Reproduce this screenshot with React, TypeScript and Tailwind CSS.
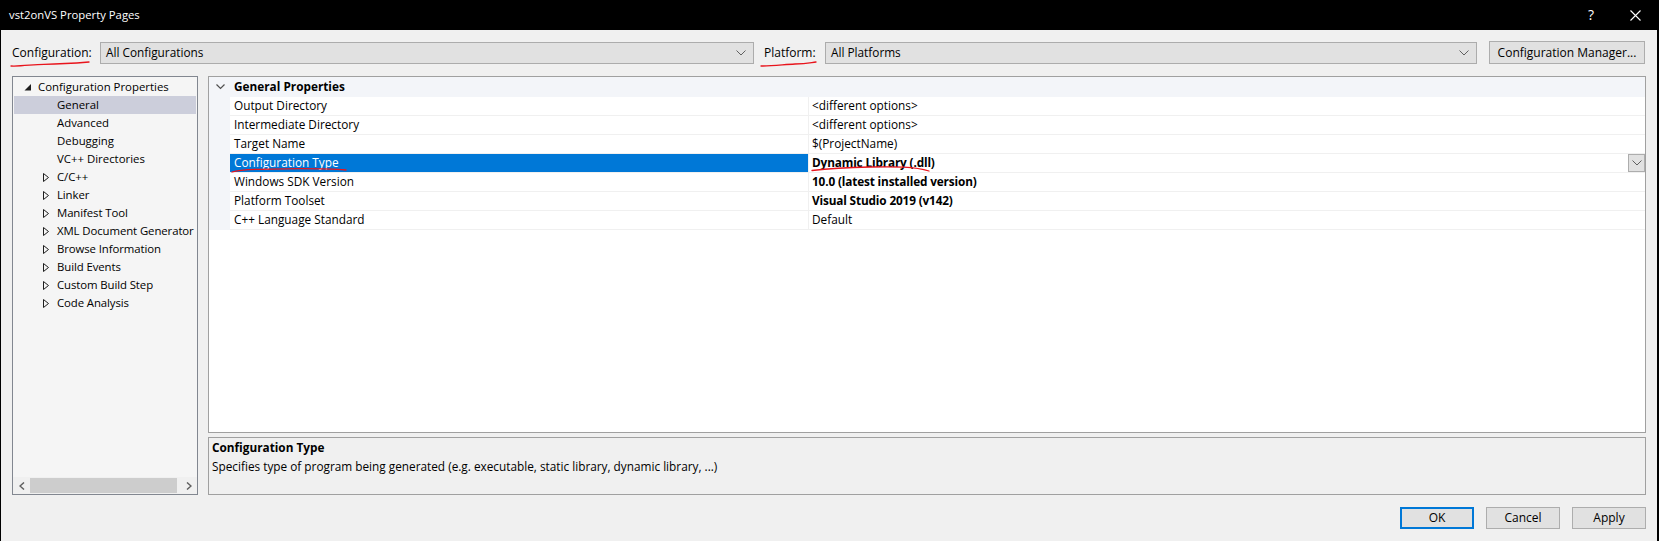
import React from "react";

const Chevron = ({ className = "" }: { className?: string }) => (
  <svg width="10" height="6" viewBox="0 0 10 6" className={className}>
    <polyline points="0.5,0.5 5,5 9.5,0.5" fill="none" stroke="#606060" strokeWidth="1" />
  </svg>
);

const ExpandedTri = () => (
  <svg width="8" height="7" viewBox="0 0 8 7">
    <polygon points="7,0 7,6.5 0.5,6.5" fill="#1e1e1e" />
  </svg>
);

const CollapsedTri = () => (
  <svg width="6" height="9" viewBox="0 0 6 9">
    <polygon points="0.5,0.5 5.5,4.5 0.5,8.5" fill="none" stroke="#1e1e1e" strokeWidth="1" />
  </svg>
);

const treeChildren = ["General", "Advanced", "Debugging", "VC++ Directories"];
const treeCollapsed = [
  "C/C++",
  "Linker",
  "Manifest Tool",
  "XML Document Generator",
  "Browse Information",
  "Build Events",
  "Custom Build Step",
  "Code Analysis",
];

const rows: { name: string; value: string; bold?: boolean; selected?: boolean }[] = [
  { name: "Output Directory", value: "<different options>" },
  { name: "Intermediate Directory", value: "<different options>" },
  { name: "Target Name", value: "$(ProjectName)" },
  { name: "Configuration Type", value: "Dynamic Library (.dll)", bold: true, selected: true },
  { name: "Windows SDK Version", value: "10.0 (latest installed version)", bold: true },
  { name: "Platform Toolset", value: "Visual Studio 2019 (v142)", bold: true },
  { name: "C++ Language Standard", value: "Default" },
];

export default function App() {
  return (
    <div className="relative w-[1659px] h-[541px] bg-black flex flex-col overflow-hidden font-['Open_Sans',sans-serif] text-[11.8px] text-black leading-none">
      {/* Title bar */}
      <div className="h-[30px] flex items-center pl-[9px] pr-[18px] text-white shrink-0">
        <span className="text-[11.3px]">vst2onVS Property Pages</span>
        <div className="flex-1" />
        <span className="text-[14px] mr-[36px]">?</span>
        <svg width="11" height="11" viewBox="0 0 11 11">
          <path d="M0.5 0.5 L10.5 10.5 M10.5 0.5 L0.5 10.5" stroke="#ffffff" strokeWidth="1.1" />
        </svg>
      </div>

      {/* Body */}
      <div className="flex-1 ml-[1px] mr-[2px] bg-[#f0f0f0] flex flex-col pl-[11px] pr-[11px]">
        {/* Top row */}
        <div className="mt-[11px] h-[23px] flex items-center shrink-0">
          <span className="w-[88px] text-[12px]">Configuration:</span>
          <div className="w-[654px] h-[22px] bg-[#e1e1e1] border border-[#acacac] flex items-center pl-[5px] pr-[7px]">
            <span className="flex-1">All Configurations</span>
            <Chevron />
          </div>
          <span className="ml-[10px] w-[61px] text-[12px]">Platform:</span>
          <div className="w-[652px] h-[22px] bg-[#e1e1e1] border border-[#acacac] flex items-center pl-[5px] pr-[7px]">
            <span className="flex-1">All Platforms</span>
            <Chevron />
          </div>
          <div className="ml-[12px] w-[156px] h-[23px] bg-[#e1e1e1] border border-[#adadad] flex items-center justify-center text-[12px]">
            Configuration Manager...
          </div>
        </div>

        {/* Main */}
        <div className="mt-[12px] h-[419px] flex gap-[10px] shrink-0">
          {/* Tree */}
          <div className="w-[186px] border border-[#828790] bg-[#f5f5f5] flex flex-col">
            <div className="flex-1 pt-[1px] px-[1px] overflow-hidden text-[11.4px]">
              <div className="h-[18px] flex items-center pl-[10px] whitespace-nowrap">
                <div className="w-[14px] shrink-0 flex items-center">
                  <ExpandedTri />
                </div>
                <span>Configuration Properties</span>
              </div>
              {treeChildren.map((t) => (
                <div
                  key={t}
                  className={`h-[18px] flex items-center pl-[43px] whitespace-nowrap ${
                    t === "General" ? "bg-[#cccedb]" : ""
                  }`}
                >
                  <span>{t}</span>
                </div>
              ))}
              {treeCollapsed.map((t) => (
                <div key={t} className="h-[18px] flex items-center pl-[29px] whitespace-nowrap">
                  <div className="w-[14px] shrink-0 flex items-center">
                    <CollapsedTri />
                  </div>
                  <span className="shrink-0 tracking-[-0.1px]">{t}</span>
                </div>
              ))}
            </div>
            {/* Scrollbar */}
            <div className="h-[17px] flex items-center bg-[#f0f0f0] shrink-0">
              <div className="w-[17px] h-full flex items-center justify-center">
                <svg width="6" height="8" viewBox="0 0 6 8">
                  <polyline points="5,0.5 1,4 5,7.5" fill="none" stroke="#606060" strokeWidth="1.5" />
                </svg>
              </div>
              <div className="flex-1 h-[15px] bg-[#cdcdcd] mr-[3px]" />
              <div className="w-[17px] h-full flex items-center justify-center">
                <svg width="6" height="8" viewBox="0 0 6 8">
                  <polyline points="1,0.5 5,4 1,7.5" fill="none" stroke="#606060" strokeWidth="1.5" />
                </svg>
              </div>
            </div>
          </div>

          {/* Right column */}
          <div className="flex-1 flex flex-col gap-[4px]">
            <div className="h-[357px] border border-[#a0a0a0] bg-white flex flex-col">
              <div className="h-[20px] bg-[#f3f5f9] flex items-center shrink-0">
                <div className="w-[21px] flex items-center justify-center pl-[2px]">
                  <svg width="9" height="6" viewBox="0 0 9 6">
                    <polyline points="0.5,0.5 4.5,4.5 8.5,0.5" fill="none" stroke="#505050" strokeWidth="1.2" />
                  </svg>
                </div>
                <span className="pl-[4px] font-bold">General Properties</span>
              </div>
              {rows.map((r) => (
                <div key={r.name} className="h-[19px] flex shrink-0">
                  <div className="w-[21px] bg-[#f3f5f9]" />
                  <div
                    className={`w-[578px] flex items-center pl-[4px] border-b border-[#f0f0f0] ${
                      r.selected ? "bg-[#0078d7] text-white border-[#0078d7]" : ""
                    }`}
                  >
                    {r.name}
                  </div>
                  <div className="flex-1 flex items-center border-l border-b border-[#f0f0f0] pl-[3px]">
                    <span className={`flex-1 ${r.bold ? "font-bold tracking-[-0.15px]" : ""}`}>{r.value}</span>
                    {r.selected && (
                      <div className="w-[17px] h-[18px] bg-[#e1e1e1] border border-[#adadad] flex items-center justify-center">
                        <Chevron />
                      </div>
                    )}
                  </div>
                </div>
              ))}
            </div>
            <div className="h-[58px] border border-[#a0a0a0] bg-[#f0f0f0] pl-[3px] pt-[4px] flex flex-col gap-[7px]">
              <span className="font-bold">Configuration Type</span>
              <span>Specifies type of program being generated (e.g. executable, static library, dynamic library, ...)</span>
            </div>
          </div>
        </div>

        {/* Buttons */}
        <div className="mt-[12px] h-[22px] flex justify-end gap-[12px] shrink-0 text-[12px]">
          <div className="w-[74px] h-[22px] bg-[#e1e1e1] border-2 border-[#0078d7] flex items-center justify-center">
            OK
          </div>
          <div className="w-[74px] h-[22px] bg-[#e1e1e1] border border-[#adadad] flex items-center justify-center">
            Cancel
          </div>
          <div className="w-[74px] h-[22px] bg-[#e1e1e1] border border-[#adadad] flex items-center justify-center">
            Apply
          </div>
        </div>
      </div>

      {/* Red annotation underlines */}
      <svg
        className="absolute left-0 top-0 pointer-events-none"
        width="1659"
        height="541"
        viewBox="0 0 1659 541"
      >
        <g fill="none" stroke="#e8141c" strokeWidth="1.3" strokeLinecap="round">
          <path d="M11 66 C 22 66.5, 32 64.5, 44 64.3 S 70 63.5, 89 62" />
          <path d="M761 66 C 772 66.3, 784 64.5, 795 64 S 808 63, 816 62" />
          <path d="M232 172 C 238 170, 246 169.6, 258 169.3 L 300 168.6 C 320 168.6, 335 169, 346 170" />
          <path d="M812 170.5 C 830 168.5, 850 167.5, 870 167 C 895 166.5, 915 166.5, 929 171" />
        </g>
      </svg>
    </div>
  );
}
